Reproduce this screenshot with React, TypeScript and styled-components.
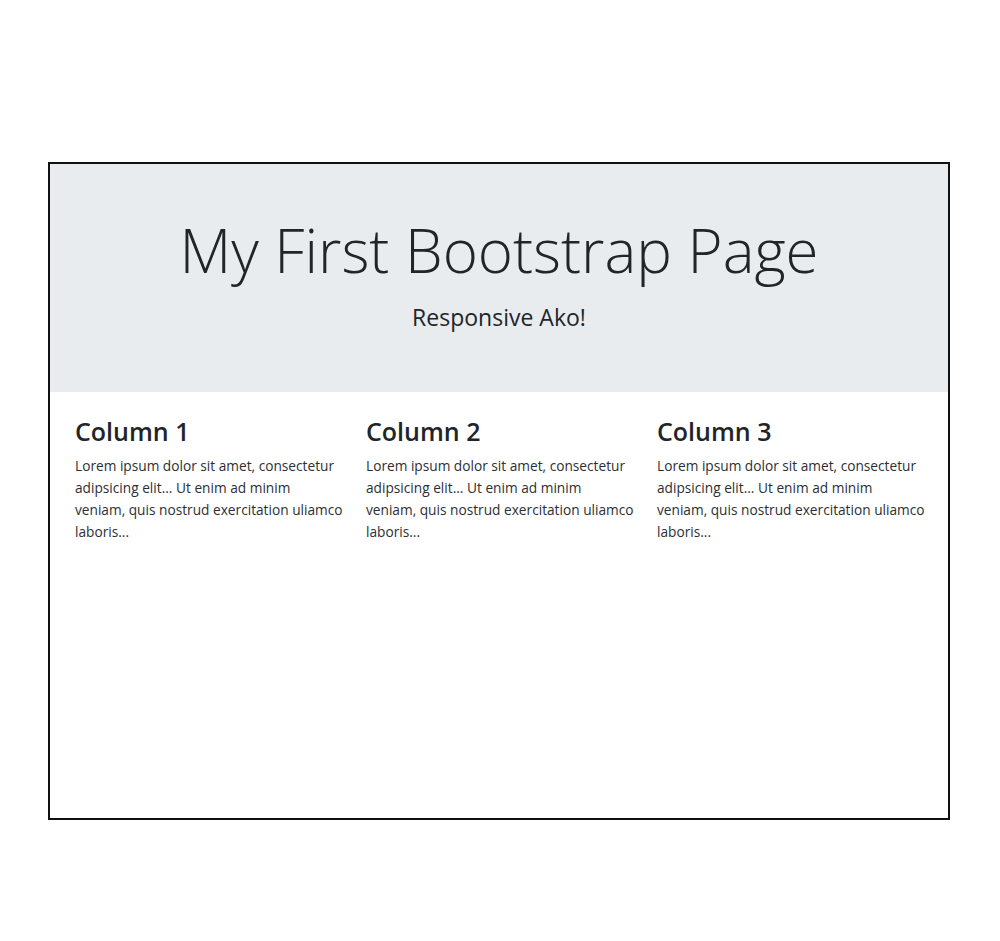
import React from 'react'
import styled, { createGlobalStyle } from 'styled-components'

const GlobalStyle = createGlobalStyle`
  html, body {
    margin: 0;
    padding: 0;
    background: #ffffff;
  }
  body {
    font-family: 'Open Sans', 'Noto Sans', sans-serif;
    color: #212529;
  }
`

const columns = [
  { title: 'Column 1' },
  { title: 'Column 2' },
  { title: 'Column 3' }
]

const lorem =
  'Lorem ipsum dolor sit amet, consectetur adipsicing elit... Ut enim ad minim veniam, quis nostrud exercitation uliamco laboris...'

const App: React.FC = () => {
  return (
    <>
      <GlobalStyle />
      <Page>
        <Frame>
          <Jumbotron>
            <Title>My First Bootstrap Page</Title>
            <Lead>Responsive Ako!</Lead>
          </Jumbotron>
          <Container>
            {columns.map((col) => (
              <Column key={col.title}>
                <ColumnTitle>{col.title}</ColumnTitle>
                <ColumnText>{lorem}</ColumnText>
              </Column>
            ))}
          </Container>
        </Frame>
      </Page>
    </>
  )
}

const Page = styled.div`
  width: 1000px;
  height: 941px;
  padding: 162px 0 0 48px;
  box-sizing: border-box;
`

const Frame = styled.div`
  width: 902px;
  height: 658px;
  box-sizing: border-box;
  border: 2px solid #111;
  display: flex;
  flex-direction: column;
`

const Jumbotron = styled.div`
  height: 228px;
  background-color: #e9ecef;
  display: flex;
  flex-direction: column;
  align-items: center;
  box-sizing: border-box;
  padding-top: 46px;
`

const Title = styled.h1`
  margin: 0;
  font-weight: 300;
  font-size: 60px;
  line-height: 80px;
  color: #212529;
`

const Lead = styled.p`
  margin: 12px 0 0;
  font-size: 23px;
  line-height: 30px;
  font-weight: 400;
`

const Container = styled.div`
  display: grid;
  grid-template-columns: repeat(3, 291px);
  padding: 23px 12px 0;
`

const Column = styled.div`
  padding: 0 10px 0 13px;
`

const ColumnTitle = styled.h3`
  margin: 0 0 8px;
  font-size: 25px;
  line-height: 32px;
  font-weight: 600;
`

const ColumnText = styled.p`
  margin: 0;
  font-size: 13.7px;
  line-height: 22px;
  color: #2b2f33;
`

export default App
